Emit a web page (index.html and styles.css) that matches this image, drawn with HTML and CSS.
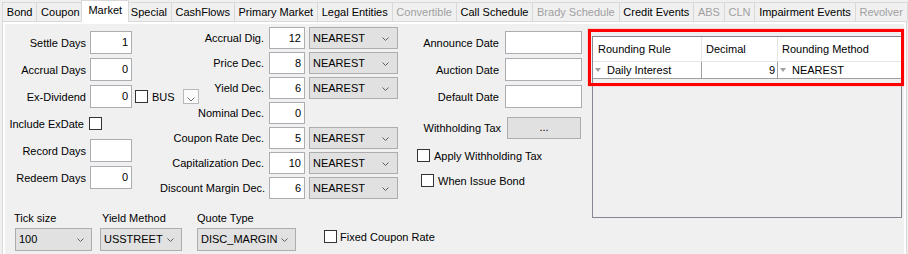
FILE: index.html
```html
<!DOCTYPE html>
<html lang="en">
<head>
    <meta charset="UTF-8">
    <meta name="viewport" content="width=device-width, initial-scale=1.0">
    <title>Bond - Market</title>
    <link rel="stylesheet" href="styles.css">
</head>
<body>
    <!-- Tab strip -->
    <div class="tabs">
        <div class="tab">Bond</div>
        <div class="tab">Coupon</div>
        <div class="tab active">Market</div>
        <div class="tab">Special</div>
        <div class="tab">CashFlows</div>
        <div class="tab">Primary Market</div>
        <div class="tab">Legal Entities</div>
        <div class="tab disabled">Convertible</div>
        <div class="tab">Call Schedule</div>
        <div class="tab disabled">Brady Schedule</div>
        <div class="tab">Credit Events</div>
        <div class="tab disabled">ABS</div>
        <div class="tab disabled">CLN</div>
        <div class="tab">Impairment Events</div>
        <div class="tab disabled">Revolver</div>
    </div>

    <div class="panel">
        <div class="page">
            <div class="left">
                <div class="fields">
                    <!-- Days -->
                    <div class="col1">
                        <span class="lbl">Settle Days</span>
                        <div class="input num">1</div>
                        <span></span>

                        <span class="lbl">Accrual Days</span>
                        <div class="input num">0</div>
                        <span></span>

                        <span class="lbl">Ex-Dividend</span>
                        <div class="input num">0</div>
                        <div class="exdiv">
                            <span class="check"></span>
                            <span class="bus">BUS</span>
                            <div class="mini-combo">
                                <svg width="8" height="5" viewBox="0 0 8 5"><path d="M0.5 0.5 L4 4 L7.5 0.5" fill="none" stroke="#707070"/></svg>
                            </div>
                        </div>

                        <span class="lbl lbl-include">Include ExDate</span>
                        <div><span class="check check-include"></span></div>
                        <span></span>

                        <span class="lbl">Record Days</span>
                        <div class="input num"></div>
                        <span></span>

                        <span class="lbl">Redeem Days</span>
                        <div class="input num">0</div>
                        <span></span>
                    </div>

                    <!-- Decimals -->
                    <div class="col2">
                        <span class="lbl">Accrual Dig.</span>
                        <div class="input num">12</div>
                        <div class="combo"><span>NEAREST</span><svg width="7" height="4" viewBox="0 0 7 4"><path d="M0.5 0.5 L3.5 3.5 L6.5 0.5" fill="none" stroke="#606060"/></svg></div>

                        <span class="lbl">Price Dec.</span>
                        <div class="input num">8</div>
                        <div class="combo"><span>NEAREST</span><svg width="7" height="4" viewBox="0 0 7 4"><path d="M0.5 0.5 L3.5 3.5 L6.5 0.5" fill="none" stroke="#606060"/></svg></div>

                        <span class="lbl">Yield Dec.</span>
                        <div class="input num">6</div>
                        <div class="combo"><span>NEAREST</span><svg width="7" height="4" viewBox="0 0 7 4"><path d="M0.5 0.5 L3.5 3.5 L6.5 0.5" fill="none" stroke="#606060"/></svg></div>

                        <span class="lbl">Nominal Dec.</span>
                        <div class="input num">0</div>
                        <span></span>

                        <span class="lbl">Coupon Rate Dec.</span>
                        <div class="input num">5</div>
                        <div class="combo"><span>NEAREST</span><svg width="7" height="4" viewBox="0 0 7 4"><path d="M0.5 0.5 L3.5 3.5 L6.5 0.5" fill="none" stroke="#606060"/></svg></div>

                        <span class="lbl">Capitalization Dec.</span>
                        <div class="input num">10</div>
                        <div class="combo"><span>NEAREST</span><svg width="7" height="4" viewBox="0 0 7 4"><path d="M0.5 0.5 L3.5 3.5 L6.5 0.5" fill="none" stroke="#606060"/></svg></div>

                        <span class="lbl">Discount Margin Dec.</span>
                        <div class="input num">6</div>
                        <div class="combo"><span>NEAREST</span><svg width="7" height="4" viewBox="0 0 7 4"><path d="M0.5 0.5 L3.5 3.5 L6.5 0.5" fill="none" stroke="#606060"/></svg></div>
                    </div>

                    <!-- Dates and tax -->
                    <div class="col3">
                        <div class="dates">
                            <span class="lbl">Announce Date</span>
                            <div class="input"></div>
                            <span class="lbl">Auction Date</span>
                            <div class="input"></div>
                            <span class="lbl">Default Date</span>
                            <div class="input"></div>
                        </div>
                        <div class="tax">
                            <span class="lbl">Withholding Tax</span>
                            <div class="button">...</div>
                        </div>
                        <div class="check-row apply"><span class="check"></span>Apply Withholding Tax</div>
                        <div class="check-row issue"><span class="check"></span>When Issue Bond</div>
                    </div>
                </div>

                <!-- Tick / yield / quote -->
                <div class="bottom">
                    <div class="group tick">
                        <div class="group-lbl">Tick size</div>
                        <div class="combo"><span>100</span><svg width="7" height="4" viewBox="0 0 7 4"><path d="M0.5 0.5 L3.5 3.5 L6.5 0.5" fill="none" stroke="#606060"/></svg></div>
                    </div>
                    <div class="group yield">
                        <div class="group-lbl">Yield Method</div>
                        <div class="combo"><span>USSTREET</span><svg width="7" height="4" viewBox="0 0 7 4"><path d="M0.5 0.5 L3.5 3.5 L6.5 0.5" fill="none" stroke="#606060"/></svg></div>
                    </div>
                    <div class="group quote">
                        <div class="group-lbl">Quote Type</div>
                        <div class="combo"><span>DISC_MARGIN</span><svg width="7" height="4" viewBox="0 0 7 4"><path d="M0.5 0.5 L3.5 3.5 L6.5 0.5" fill="none" stroke="#606060"/></svg></div>
                    </div>
                    <div class="check-row fixed"><span class="check"></span>Fixed Coupon Rate</div>
                </div>
            </div>

            <!-- Rounding grid -->
            <div class="rounding">
                <div class="grid-row grid-head">
                    <div class="cell c-rule">Rounding Rule</div>
                    <div class="cell c-dec">Decimal</div>
                    <div class="cell c-method">Rounding Method</div>
                </div>
                <div class="grid-row grid-data">
                    <div class="cell c-rule"><span class="tri"></span>Daily Interest</div>
                    <div class="cell c-dec num">9</div>
                    <div class="cell c-method"><span class="tri"></span>NEAREST</div>
                </div>
            </div>

            <!-- Highlight round the grid -->
            <div class="highlight"></div>
        </div>
    </div>
</body>
</html>
```

FILE: styles.css
```css
/* General */
body {
    margin: 0;
    font-family: "Liberation Sans", Arial, sans-serif;
    font-size: 11px;
    color: #000;
    background-color: #f0f0f0;
    height: 254px;
    overflow: hidden;
}

/* Tab strip */
.tabs {
    display: flex;
    align-items: flex-end;
    height: 21px;
    padding-left: 3px;
}

.tab {
    box-sizing: border-box;
    height: 19px;
    line-height: 18px;
    padding: 0 3.8px;
    margin-left: -1px;
    border: 1px solid #d9d9d9;
    border-bottom: none;
    background-color: #f0f0f0;
    white-space: nowrap;
}

.tab.disabled {
    color: #a0a0a0;
}

.tab.active {
    position: relative;
    z-index: 1;
    height: 22px;
    line-height: 19px;
    margin: 0 -2px -1px -3px;
    padding: 0 6px;
    background-color: #fff;
}

/* Tab page */
.panel {
    margin-left: 2px;
    width: 905px;
    box-sizing: border-box;
    border: 1px solid #d9d9d9;
    background-color: #fff;
    padding: 2px;
}

.page {
    position: relative;
    display: flex;
    min-height: 240px;
    background-color: #f0f0f0;
}

.left {
    flex: 0 0 577px;
    min-width: 0;
}

.fields {
    display: flex;
    height: 175px;
}

.lbl {
    text-align: right;
    white-space: nowrap;
}

.input {
    box-sizing: border-box;
    height: 23px;
    border: 1px solid #abadb3;
    background-color: #fff;
}

.num {
    text-align: right;
    padding-right: 3px;
    line-height: 21px;
}

.check {
    display: inline-block;
    box-sizing: border-box;
    width: 13px;
    height: 13px;
    border: 1px solid #333;
    background-color: #fff;
    flex-shrink: 0;
}

.combo {
    box-sizing: border-box;
    display: flex;
    flex-shrink: 0;
    align-items: center;
    justify-content: space-between;
    height: 22px;
    padding: 0 8px 1px 3px;
    border: 1px solid #adadad;
    background-color: #e1e1e1;
    white-space: nowrap;
}

.combo svg {
    margin-top: 2px;
}

/* Left column: days */
.col1 {
    flex: 0 0 155px;
    min-width: 0;
    display: grid;
    grid-template-columns: 81px 42px auto;
    grid-auto-rows: 23px;
    column-gap: 4px;
    row-gap: 4px;
    align-items: center;
    align-content: start;
    padding-top: 7px;
    box-sizing: border-box;
}

.lbl-include {
    padding-right: 2px;
}

.check-include {
    display: block;
    margin-left: -1px;
}

.exdiv {
    display: flex;
    align-items: center;
    margin-left: -1px;
}

.bus {
    margin-left: 4px;
}

.mini-combo {
    box-sizing: border-box;
    display: flex;
    align-items: flex-end;
    width: 16px;
    height: 15px;
    margin-left: 8px;
    padding: 0 0 1px 3px;
    border: 1px solid #b9b9b9;
    background-color: #fbfbfb;
}

/* Middle column: decimals */
.col2 {
    flex: 0 0 238px;
    min-width: 0;
    display: grid;
    grid-template-columns: 105px 36px 89px;
    grid-auto-rows: 22px;
    column-gap: 4px;
    row-gap: 3px;
    align-items: center;
    align-content: start;
    padding-top: 3px;
    box-sizing: border-box;
}

.col2 .lbl {
    padding-right: 1px;
}

.col2 .input {
    height: 22px;
    line-height: 20px;
}

/* Right column: dates */
.col3 {
    flex: 0 0 172px;
    min-width: 0;
    margin-left: 12px;
    padding-top: 7px;
}

.dates {
    display: grid;
    grid-template-columns: 89px 77px;
    grid-auto-rows: 23px;
    column-gap: 6px;
    row-gap: 4px;
    align-items: center;
}

.tax {
    display: flex;
    align-items: center;
    margin-top: 9px;
}

.tax .lbl {
    width: 91px;
}

.button {
    box-sizing: border-box;
    width: 74px;
    height: 22px;
    margin-left: 6px;
    line-height: 18px;
    text-align: center;
    border: 1px solid #adadad;
    background-color: #e1e1e1;
}

.check-row {
    display: flex;
    align-items: center;
    gap: 4px;
    height: 17px;
    white-space: nowrap;
}

.apply {
    margin-top: 8px;
    padding-left: 7px;
}

.issue {
    margin-top: 8px;
    padding-left: 11px;
}

/* Bottom row */
.bottom {
    display: flex;
    margin-top: 12px;
    padding-left: 9px;
}

.group-lbl {
    line-height: 14px;
    height: 14px;
    margin-bottom: 3px;
}

.group .combo {
    height: 23px;
    padding-right: 7px;
}

.tick {
    width: 86px;
}

.tick .combo {
    width: 77px;
    margin-left: 1px;
}

.yield {
    width: 97px;
}

.yield .group-lbl {
    padding-left: 2px;
}

.yield .combo {
    width: 82px;
}

.quote {
    width: 127px;
}

.quote .combo {
    width: 99px;
}

.fixed {
    margin-top: 17px;
    gap: 3px;
}

/* Rounding grid */
.rounding {
    box-sizing: border-box;
    flex: 0 0 310px;
    height: 182px;
    margin: 12px 0 0 10px;
    border: 1px solid #828790;
    background-color: #f0f0f0;
}

.grid-row {
    display: flex;
}

.cell {
    box-sizing: border-box;
    display: flex;
    align-items: center;
    white-space: nowrap;
}

.c-rule {
    width: 109px;
}

.c-dec {
    width: 76px;
}

.c-method {
    width: 123px;
}

.grid-head {
    height: 24px;
    background-color: #fff;
    border-bottom: 1px solid #e5e5e5;
}

.grid-head .cell {
    padding-left: 4px;
    border-right: 1px solid #e5e5e5;
}

.grid-head .c-rule {
    padding-left: 5px;
}

.grid-head .c-method {
    border-right: none;
}

.grid-data {
    height: 16px;
    background-color: #fff;
    border-bottom: 1px solid #a0a0a0;
}

.grid-data .cell {
    padding-left: 2px;
    border-right: 1px solid #a0a0a0;
}

.grid-data .c-method {
    border-right: none;
}

.grid-data .num {
    justify-content: flex-end;
    padding-right: 2px;
    line-height: 15px;
}

.tri {
    width: 0;
    height: 0;
    margin-right: 6px;
    border-left: 3px solid transparent;
    border-right: 3px solid transparent;
    border-top: 4px solid #a0a0a0;
}

/* Red box round the grid */
.highlight {
    position: absolute;
    left: 583px;
    top: 5px;
    width: 316px;
    height: 57px;
    box-sizing: border-box;
    border: 3px solid #f00;
    box-shadow: 0 0 1px #f66;
}
```
